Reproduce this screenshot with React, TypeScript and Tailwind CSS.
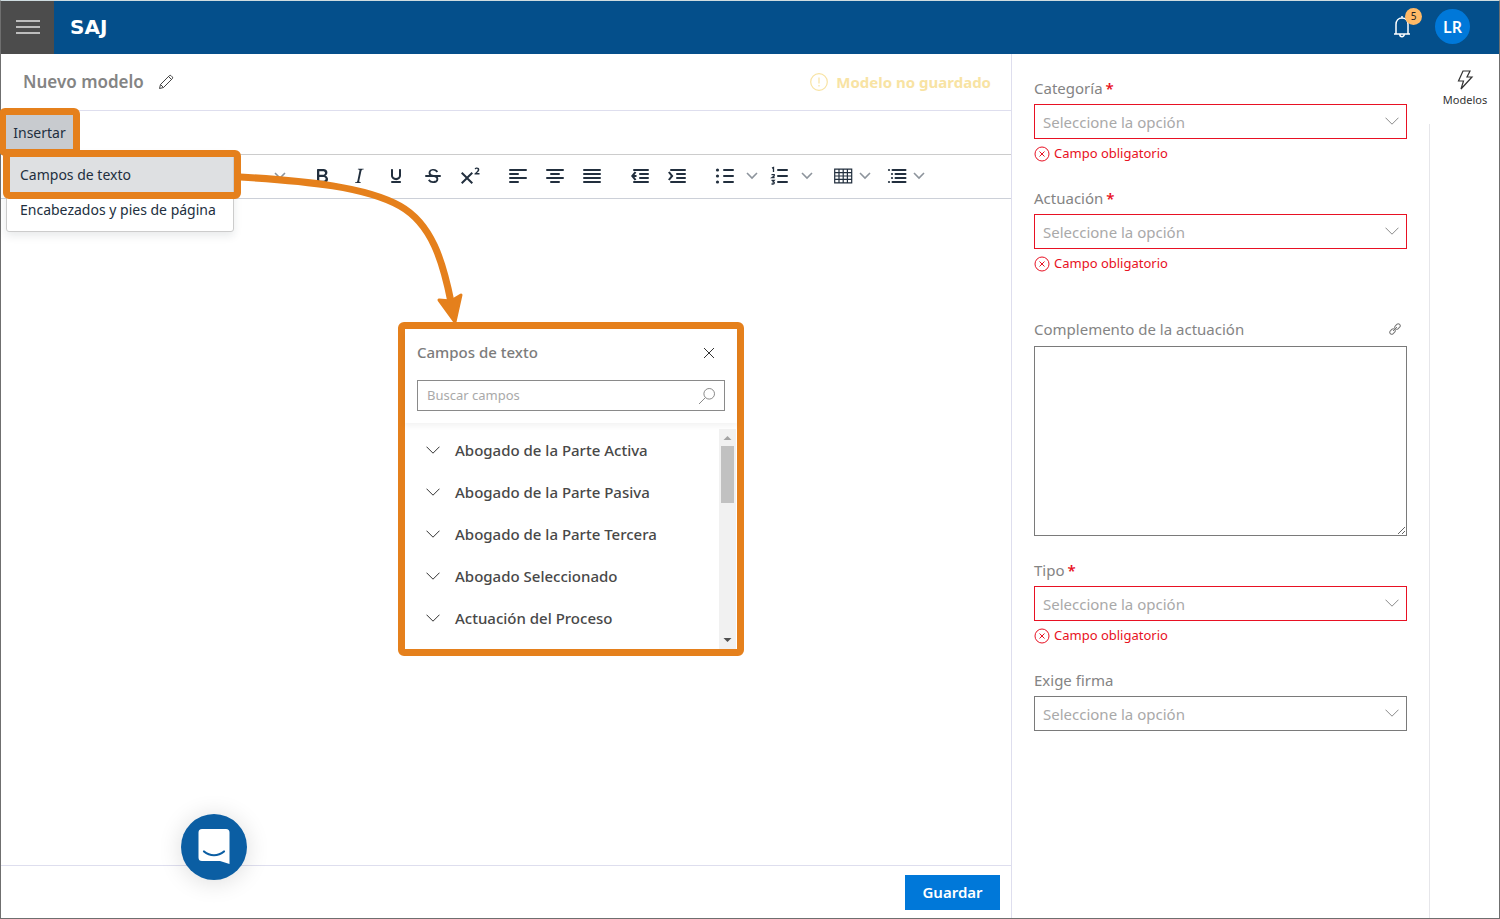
import type { ReactNode } from "react";

const fields = [
  "Abogado de la Parte Activa",
  "Abogado de la Parte Pasiva",
  "Abogado de la Parte Tercera",
  "Abogado Seleccionado",
  "Actuación del Proceso",
];

function Chevron({ className }: { className: string }) {
  return (
    <svg viewBox="0 0 14 8" className={className} fill="none" stroke="currentColor" aria-hidden="true">
      <path d="M.5.7 7 7.2 13.5.7" />
    </svg>
  );
}

function Glyph({ children }: { children: ReactNode }) {
  return (
    <svg viewBox="0 0 24 24" className="size-6 shrink-0" fill="currentColor" aria-hidden="true">
      {children}
    </svg>
  );
}

function Lines({ d }: { d: string }) {
  return <path d={d} fill="none" stroke="currentColor" strokeWidth="2" strokeLinecap="round" />;
}

function Tool({ label, children }: { label: string; children: ReactNode }) {
  return (
    <button type="button" aria-label={label} className="flex h-9 w-[37px] items-center justify-center">
      <Glyph>{children}</Glyph>
    </button>
  );
}

function Caret() {
  return (
    <svg viewBox="0 0 16 16" className="size-4 shrink-0 text-[#8d949c]" fill="none" stroke="currentColor" strokeWidth="1.6" aria-hidden="true">
      <path d="M3 5 8 10 13 5" />
    </svg>
  );
}

function SplitTool({ label, children }: { label: string; children: ReactNode }) {
  return (
    <div className="flex gap-px">
      <button type="button" aria-label={label} className="flex h-9 w-9 items-center justify-center">
        <Glyph>{children}</Glyph>
      </button>
      <button type="button" aria-label={`${label}: opciones`} className="flex h-9 items-center">
        <Caret />
      </button>
    </div>
  );
}

function MenuTool({ label, children }: { label: string; children: ReactNode }) {
  return (
    <button type="button" aria-label={label} className="flex h-9 items-center gap-0.5">
      <Glyph>{children}</Glyph>
      <Caret />
    </button>
  );
}

function Toolbar() {
  return (
    <div className="flex h-[45px] items-center border-y border-[#ccd0d8] border-t-[#cccccc] pb-0.5 pl-[271px] text-[#222f3e]">
      <button type="button" aria-label="Formato" className="flex h-9 items-center pr-[15px]">
        <Caret />
      </button>
      <div className="flex">
        <Tool label="Negrita">
          <path d="M7.8 19c-.3 0-.5 0-.6-.2l-.2-.5V5.7c0-.2 0-.4.2-.5l.6-.2h5c1.5 0 2.7.3 3.5 1 .7.6 1.1 1.4 1.1 2.5a3 3 0 0 1-.6 1.900c-.4.6-1 1-1.600 1.200.4.1.9.3 1.300.6s.8.7 1 1.200c.4.4.5 1 .5 1.600 0 1.300-.4 2.300-1.300 3-.8.7-2.100 1-3.800 1H7.800Zm5-8.300c.6 0 1.200-.1 1.600-.5.4-.3.6-.7.6-1.300 0-1.100-.8-1.700-2.300-1.700H9.300v3.500h3.500Zm.5 6c.7 0 1.300-.1 1.700-.4.4-.4.6-.9.6-1.500s-.2-1-.7-1.400c-.4-.3-1-.4-2-.4H9.300v3.700h4Z" />
        </Tool>
        <Tool label="Cursiva">
          <path d="m16.7 4.7-.1.9h-.3c-.6 0-1 0-1.4.3-.3.3-.4.6-.5 1.1l-2.1 9.8v.6c0 .5.4.8 1.4.8h.2l-.2.8H8l.2-.8h.2c1.1 0 1.8-.5 2-1.5l2-9.8.1-.5c0-.6-.4-.8-1.4-.8h-.3l.2-.9h5.7Z" />
        </Tool>
        <Tool label="Subrayado">
          <path d="M16 5c.6 0 1 .4 1 1v5.5a4 4 0 0 1-.4 1.8l-1 1.4a5.3 5.3 0 0 1-5.5 1 5 5 0 0 1-1.6-1c-.5-.4-.8-.9-1.1-1.4a4 4 0 0 1-.4-1.8V6c0-.6.4-1 1-1s1 .4 1 1v5.5c0 .3 0 .6.2 1l.6.7a3.3 3.3 0 0 0 2.2.8 3.4 3.4 0 0 0 2.2-.8c.3-.2.4-.5.6-.8l.2-.9V6c0-.6.4-1 1-1ZM8 17h8c.6 0 1 .4 1 1s-.4 1-1 1H8a1 1 0 0 1 0-2Z" />
        </Tool>
        <Tool label="Tachado">
          <path d="M15.6 8.5c-.5-.7-1-1.1-1.3-1.3-.6-.4-1.3-.6-2-.6-2.7 0-2.8 1.7-2.8 2.1 0 1.6 1.8 2 3.2 2.3 4.4.9 4.6 2.8 4.6 3.9 0 1.4-.7 4.1-5 4.1A6.2 6.2 0 0 1 7 16.4l1.5-1.1c.4.6 1.6 2 3.7 2 1.6 0 2.5-.4 3-1.2.4-.8.3-2-.8-2.6-.7-.4-1.6-.7-2.9-1-1-.2-3.9-.8-3.9-3.6C7.6 6 10.3 5 12.4 5c2.9 0 4.2 1.6 4.7 2.4l-1.5 1.1Z" />
          <Lines d="M5 12h14" />
        </Tool>
        <Tool label="Superíndice">
          <path d="M15 9.4 10.4 14l4.6 4.6-1.4 1.4L9 15.4 4.4 20 3 18.6 7.6 14 3 9.4 4.4 8 9 12.6 13.6 8 15 9.4ZM21.5 10.5h-5v-1l1-.8 1.7-1.6c.3-.5.5-.9.5-1.3 0-.3 0-.5-.2-.7-.2-.2-.5-.3-.9-.3l-.8.2-.7.4-.4-1.2c.2-.2.5-.4 1-.5.3-.2.8-.2 1.2-.2.8 0 1.4.2 1.8.6.4.4.6 1 .6 1.6 0 .5-.2 1-.5 1.5l-1.3 1.4-.6.5h2.6v1.4Z" />
        </Tool>
      </div>
      <div className="ml-[11px] flex">
        <Tool label="Alinear a la izquierda">
          <Lines d="M4 6h16M4 10h8M4 14h16M4 18h8" />
        </Tool>
        <Tool label="Centrar">
          <Lines d="M4 6h16M8 10h8M4 14h16M8 18h8" />
        </Tool>
        <Tool label="Justificar">
          <Lines d="M4 6h16M4 10h16M4 14h16M4 18h16" />
        </Tool>
      </div>
      <div className="ml-[11px] flex">
        <Tool label="Reducir sangría">
          <Lines d="M6 6h14M12 10h8M12 14h8M6 18h14" />
          <path d="M8.4 8.6 5.6 12l2.8 3.4-1.7 1.2L3 12l3.7-4.6Z" />
          <path d="M5 11h3.5v2H5Z" />
        </Tool>
        <Tool label="Aumentar sangría">
          <Lines d="M6 6h14M12 10h8M12 14h8M6 18h14" />
          <path d="M3 8.6 5.8 12 3 15.4l1.7 1.2L8.4 12 4.7 7.4Z" />
        </Tool>
      </div>
      <div className="ml-3 flex gap-0.5">
        <SplitTool label="Lista con viñetas">
          <Lines d="M11 6h9M11 12h9M11 18h9" />
          <circle cx="4.500" cy="6" r="1.6" />
          <circle cx="4.500" cy="12" r="1.6" />
          <circle cx="4.500" cy="18" r="1.6" />
        </SplitTool>
        <SplitTool label="Lista numerada">
          <Lines d="M10 6h9M10 12h9M10 18h9" />
          <path
            d="M4 4.200 5.500 3.500V8M3.500 10.700h2.700V12L4 13.600h2.600M3.500 16.300h2.700l-1.200 1.500c2 .2 1.500 2.200 0 2.200H3.500"
            fill="none"
            stroke="currentColor"
            strokeWidth="1.3"
          />
        </SplitTool>
      </div>
      <div className="ml-4 flex gap-3">
        <MenuTool label="Tabla">
          <path d="M3.7 5.2h17v13.6h-17ZM3.7 8.6h17M3.7 12h17M3.7 15.400h17M8 5v14M12.200 5v14M16.400 5v14" fill="none" stroke="currentColor" strokeWidth="1.2" />
        </MenuTool>
        <MenuTool label="Lista multinivel">
          <Lines d="M7.500 6h13M10.500 10h10M10.500 14h10M7.500 18h13" />
          <circle cx="4" cy="6" r="1.1" />
          <circle cx="7" cy="10" r="1.1" />
          <circle cx="7" cy="14" r="1.1" />
          <circle cx="4" cy="18" r="1.1" />
        </MenuTool>
      </div>
    </div>
  );
}

function MenuBar() {
  return (
    <div className="flex h-[43px] items-start px-[5px] pt-1">
      <div className="relative z-10">
        <button type="button" aria-haspopup="menu" aria-expanded="true" className="h-[34px] w-[67px] bg-[#c8cbcf] pt-0.5 text-center text-sm text-[#222f3e]">
          Insertar
        </button>
        <div className="pointer-events-none absolute -inset-[7px] rounded-md border-[7px] border-[#e5801c]" />
        <div role="menu" className="absolute top-[37px] left-0 flex w-[228px] flex-col rounded-[3px] border border-[#cccccc] bg-white py-1 text-sm text-[#222f3e] shadow-[0_4px_8px_rgba(34,47,62,0.1)]">
          <div className="relative">
            <button type="button" role="menuitem" className="h-[35px] w-full bg-[#dee0e2] pl-[13px] text-left whitespace-nowrap">
              Campos de texto
            </button>
            <div className="pointer-events-none absolute -inset-x-[4px] -inset-y-[7px] -right-[8px] rounded-md border-[7px] border-[#e5801c]" />
          </div>
          <button type="button" role="menuitem" className="h-[35px] pl-[13px] text-left whitespace-nowrap">
            Encabezados y pies de página
          </button>
        </div>
      </div>
    </div>
  );
}

function FieldsDialog() {
  return (
    <section aria-label="Campos de texto" className="absolute top-[321px] left-[397px] z-20 flex w-[346px] flex-col rounded-md border-[7px] border-[#e5801c] bg-white">
      <div className="px-3 pb-3 shadow-[0_3px_6px_rgba(0,0,0,0.05)]">
        <div className="flex h-[51px] items-center justify-between pr-2 pb-1">
          <h2 className="text-[15px] font-medium text-[#7c7c7c]">Campos de texto</h2>
          <button type="button" aria-label="Cerrar" className="flex size-4 items-center justify-center text-[#333333]">
            <svg viewBox="0 0 12 12" className="size-3" fill="none" stroke="currentColor" aria-hidden="true">
              <path d="m1 1 10 10M11 1 1 11" />
            </svg>
          </button>
        </div>
        <div className="flex h-[31px] items-center border border-[#8a8a8a] pr-2 pl-[9px]">
          <input type="search" aria-label="Buscar campos" placeholder="Buscar campos" className="min-w-0 flex-1 text-[13px] outline-none placeholder:text-[#a9a9a9]" />
          <svg viewBox="0 0 18 18" className="size-[18px] text-[#8a8a8a]" fill="none" stroke="currentColor" aria-hidden="true">
            <circle cx="11.200" cy="6.800" r="5.300" />
            <path d="M7.400 10.600 1 17" />
          </svg>
        </div>
      </div>
      <div className="flex pr-px">
        <ul className="mt-1.5 flex-1 pb-[10px]">
          {fields.map((name) => (
            <li key={name}>
              <button type="button" className="flex h-[42px] w-full items-center gap-[15px] pl-[21px] text-left text-[15px] font-medium text-[#484848]">
                <Chevron className="h-2 w-[14px] text-[#333333]" />
                {name}
              </button>
            </li>
          ))}
        </ul>
        <div aria-hidden="true" className="mt-1.5 flex w-[17px] flex-col items-center bg-[#f1f1f1]">
          <svg viewBox="0 0 17 17" className="size-[17px]" fill="#a3a3a3">
            <path d="M4.500 11h8l-4-4Z" />
          </svg>
          <div className="h-[57px] w-[13px] bg-[#c1c1c1]" />
          <svg viewBox="0 0 17 17" className="mt-auto size-[17px]" fill="#505050">
            <path d="M4.500 6h8l-4 4Z" />
          </svg>
        </div>
      </div>
    </section>
  );
}

function SelectField({ id, label, required }: { id: string; label: string; required?: boolean }) {
  return (
    <div>
      <label htmlFor={id} className="block h-5 text-[15px] leading-[22px] text-[#848484]">
        {label}
        {required && <span className="pl-[3px] font-semibold text-[#e81123]">*</span>}
      </label>
      <div className="relative mt-[7px]">
        <select
          id={id}
          defaultValue=""
          className={
            required
              ? "h-[35px] w-full appearance-none border border-[#e81123] bg-white pt-0.5 pr-8 pl-2 text-[15px] text-[#a9a9a9]"
              : "h-[35px] w-full appearance-none border border-[#7a7a7a] bg-white pt-0.5 pr-8 pl-2 text-[15px] text-[#a9a9a9]"
          }
        >
          <option value="">Seleccione la opción</option>
        </select>
        <Chevron className="pointer-events-none absolute top-[13px] right-2 h-2 w-[14px] text-[#8a8a8a]" />
      </div>
      {required && (
        <p className="mt-[5px] flex h-5 items-center gap-1 text-[13px] text-[#e81123]">
          <svg viewBox="0 0 16 16" className="size-4" fill="none" stroke="currentColor" aria-hidden="true">
            <circle cx="8" cy="8" r="7" />
            <path d="m5.500 5.500 5 5M10.500 5.500l-5 5" />
          </svg>
          Campo obligatorio
        </p>
      )}
    </div>
  );
}

function Header() {
  return (
    <header className="flex h-[53px] items-center bg-[#044f8b] text-white">
      <button type="button" aria-label="Menú" className="flex h-full w-[53px] items-center justify-center bg-[#4c4c4c] pb-0.5">
        <svg viewBox="0 0 24 14" className="h-[14px] w-6" stroke="#e2e2e2" strokeWidth="1.600" aria-hidden="true">
          <path d="M0 1h24M0 7h24M0 13h24" />
        </svg>
      </button>
      <a href="#inicio" className="pb-0.5 pl-4 font-['DejaVu_Sans',sans-serif] text-xl font-bold">
        SAJ
      </a>
      <div className="ml-auto flex items-center gap-[21px] pr-[29px] pb-0.5">
        <button type="button" aria-label="Notificaciones" className="relative flex h-9 w-6 items-center justify-center">
          <svg viewBox="0 0 20 24" className="h-6 w-5" fill="none" stroke="currentColor" strokeWidth="1.500" aria-hidden="true">
            <path d="M2 19h16M4 19V9.500C4 5.500 6.500 3 10 3s6 2.500 6 6.500V19M10 3V1M7.800 19.500a2.200 2.200 0 0 0 4.400 0" />
          </svg>
          <span className="absolute -top-[1px] left-[15px] flex size-[17px] items-center justify-center rounded-full bg-[#ffb966] text-[10px] text-[#222222]">5</span>
        </button>
        <button type="button" aria-label="Usuario LR" className="size-[35px] rounded-full bg-[#0078d9] text-base font-semibold">
          LR
        </button>
      </div>
    </header>
  );
}

export default function App() {
  return (
    <div className="relative flex min-h-screen flex-col border border-[#6f6f6f] border-t-[#cfdce0] bg-white font-['Noto_Sans',sans-serif]">
      <Header />
      <div className="flex flex-1">
        <main className="flex min-w-0 flex-1 flex-col">
          <div className="flex h-[57px] items-center border-b border-[#dedeee] pr-5 pl-[22px]">
            <h1 className="text-[17px] font-semibold text-[#848484]">Nuevo modelo</h1>
            <button type="button" aria-label="Editar nombre" className="ml-[14px] text-[#444444]">
              <svg viewBox="0 0 16 16" className="size-4" fill="none" stroke="currentColor" aria-hidden="true">
                <path d="m1.500 14.500 1-4 8.700-8.700a1.400 1.400 0 0 1 2 0l1 1a1.400 1.400 0 0 1 0 2L5.500 13.500ZM10.500 2.500l3 3M2.500 10.500l3 3" />
              </svg>
            </button>
            <p className="ml-auto flex items-center gap-2 text-[15px] font-bold text-[#f8e3a3]">
              <svg viewBox="0 0 18 18" className="size-[18px]" fill="none" stroke="currentColor" strokeWidth="1.200" aria-hidden="true">
                <circle cx="9" cy="9" r="8.300" />
                <path d="M9 4.500v6M9 12v1.500" />
              </svg>
              Modelo no guardado
            </p>
          </div>
          <MenuBar />
          <Toolbar />
          <div className="flex-1" />
          <footer className="flex h-[53px] items-center justify-end border-t border-[#dedeee] pr-[11px]">
            <button type="button" className="h-[35px] w-[95px] bg-[#0078d9] text-[15px] font-semibold text-white">
              Guardar
            </button>
          </footer>
        </main>
        <aside className="flex w-[418px] shrink-0 flex-col gap-[23px] border-l border-[#dedeee] px-[22px] pt-[23px]">
          <SelectField id="categoria" label="Categoría" required />
          <SelectField id="actuacion" label="Actuación" required />
          <div className="pt-[22px]">
            <div className="flex h-5 items-center justify-between pr-1.5">
              <label htmlFor="complemento" className="text-[15px] leading-[22px] text-[#848484]">
                Complemento de la actuación
              </label>
              <svg viewBox="0 0 12 12" className="size-3 text-[#777777]" fill="none" stroke="currentColor" aria-hidden="true">
                <rect x="-3" y="-2" width="6" height="4" rx="2" transform="translate(8.500 3.500) rotate(-45)" />
                <rect x="-3" y="-2" width="6" height="4" rx="2" transform="translate(3.500 8.500) rotate(-45)" />
                <path d="M4 8 8 4" />
              </svg>
            </div>
            <textarea id="complemento" className="mt-[7px] block h-[190px] w-full resize border border-[#7a7a7a] p-2 text-sm" />
          </div>
          <SelectField id="tipo" label="Tipo" required />
          <SelectField id="firma" label="Exige firma" />
        </aside>
        <nav className="flex w-[70px] shrink-0 flex-col">
          <button type="button" className="flex h-[70px] flex-col items-center gap-0.5 pt-4 pl-0.5 text-[11px] leading-4 text-[#333333]">
            <svg viewBox="0 0 18 20" className="h-5 w-[18px]" fill="none" stroke="currentColor" strokeWidth="1.200" aria-hidden="true">
              <path d="M7 1h7l-3 6h5L5 19l2.500-8H2.500Z" />
            </svg>
            Modelos
          </button>
          <div className="flex-1 border-l border-[#e6e6ea]" />
        </nav>
      </div>
      <svg viewBox="0 0 230 155" className="pointer-events-none absolute top-[169px] left-[239px] z-10 h-[155px] w-[230px]" fill="none" aria-hidden="true">
        <path d="M0 7C68 11 126 17 160 36 192 54 203 92 211 132" stroke="#e5801c" strokeWidth="7" />
        <path d="M199 130 211 131 221 125 215 152Z" fill="#e5801c" stroke="#e5801c" strokeWidth="3" strokeLinejoin="round" />
      </svg>
      <FieldsDialog />
      <button type="button" aria-label="Abrir chat" className="absolute bottom-[38px] left-[180px] flex size-[66px] items-center justify-center rounded-full bg-[#0b5ea3] shadow-[0_2px_24px_rgba(0,0,0,0.14)]">
        <svg viewBox="0 0 32 36" className="h-9 w-8" aria-hidden="true">
          <path d="M4 0h24a3.500 3.500 0 0 1 3.500 3.500V35L22 32H4A3.500 3.500 0 0 1 .5 28.500v-25A3.500 3.500 0 0 1 4 0Z" fill="#ffffff" />
          <path d="M6 22.500c6 5 14 5 20 0" fill="none" stroke="#0b5ea3" strokeWidth="2.200" strokeLinecap="round" />
        </svg>
      </button>
    </div>
  );
}
